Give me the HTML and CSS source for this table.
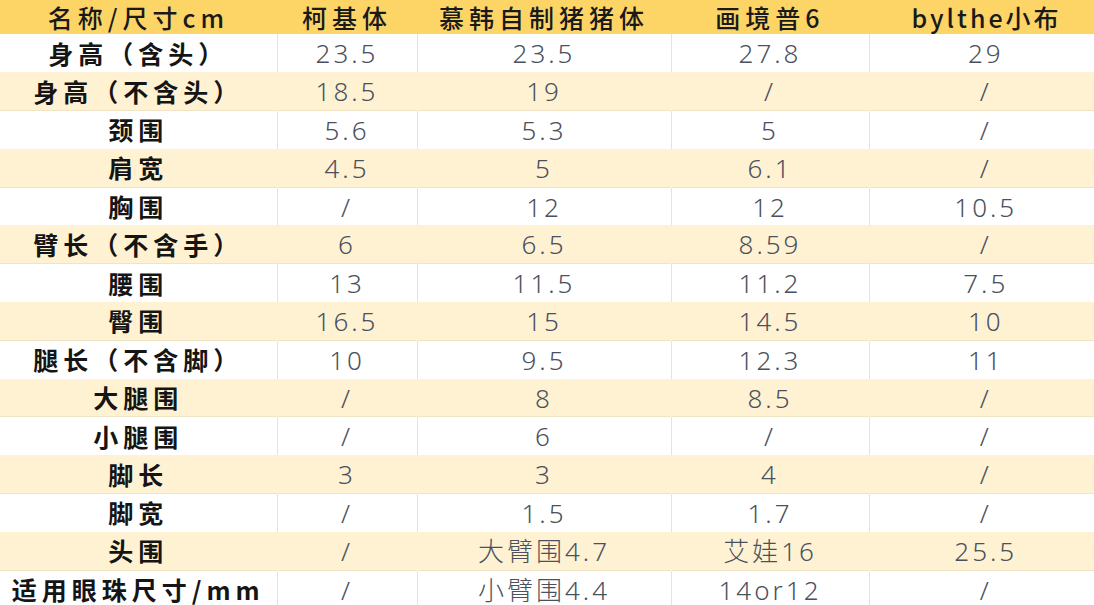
FILE: index.html
```html
<!DOCTYPE html>
<html lang="zh">
<head>
<meta charset="utf-8">
<title>尺寸对比</title>
<link rel="stylesheet" href="styles.css">
</head>
<body>
<table class="sizes">
  <colgroup>
    <col class="c1"><col class="c2"><col class="c3"><col class="c4"><col class="c5">
  </colgroup>
  <thead>
    <tr class="head">
      <th>名称/尺寸cm</th><th>柯基体</th><th>慕韩自制猪猪体</th><th>画境普6</th><th class="latin">bylthe小布</th>
    </tr>
  </thead>
  <tbody>
    <tr><th>身高（含头）</th><td>23.5</td><td>23.5</td><td>27.8</td><td>29</td></tr>
    <tr class="alt"><th>身高（不含头）</th><td>18.5</td><td>19</td><td>/</td><td>/</td></tr>
    <tr><th>颈围</th><td>5.6</td><td>5.3</td><td>5</td><td>/</td></tr>
    <tr class="alt"><th>肩宽</th><td>4.5</td><td>5</td><td>6.1</td><td>/</td></tr>
    <tr><th>胸围</th><td>/</td><td>12</td><td>12</td><td>10.5</td></tr>
    <tr class="alt"><th>臂长（不含手）</th><td>6</td><td>6.5</td><td>8.59</td><td>/</td></tr>
    <tr><th>腰围</th><td>13</td><td>11.5</td><td>11.2</td><td>7.5</td></tr>
    <tr class="alt"><th>臀围</th><td>16.5</td><td>15</td><td>14.5</td><td>10</td></tr>
    <tr><th>腿长（不含脚）</th><td>10</td><td>9.5</td><td>12.3</td><td>11</td></tr>
    <tr class="alt"><th>大腿围</th><td>/</td><td>8</td><td>8.5</td><td>/</td></tr>
    <tr><th>小腿围</th><td>/</td><td>6</td><td>/</td><td>/</td></tr>
    <tr class="alt"><th>脚长</th><td>3</td><td>3</td><td>4</td><td>/</td></tr>
    <tr><th>脚宽</th><td>/</td><td>1.5</td><td>1.7</td><td>/</td></tr>
    <tr class="alt"><th>头围</th><td>/</td><td>大臂围4.7</td><td>艾娃16</td><td>25.5</td></tr>
    <tr><th>适用眼珠尺寸/mm</th><td>/</td><td>小臂围4.4</td><td>14or12</td><td>/</td></tr>
  </tbody>
</table>
</body>
</html>
```

FILE: styles.css
```css
html, body {
  margin: 0;
  padding: 0;
  background: #ffffff;
  overflow: hidden;
}

.sizes {
  border-collapse: collapse;
  table-layout: fixed;
  width: 1094px;
  font-family: "Noto Sans CJK SC", "Noto Sans", sans-serif;
}

.c1 { width: 277px; }
.c2 { width: 140px; }
.c3 { width: 254px; }
.c4 { width: 198px; }
.c5 { width: 225px; }

.sizes th,
.sizes td {
  padding: 0;
  text-align: center;
  white-space: nowrap;
  line-height: 1;
}

.head {
  height: 34px;
  background: #fdd567;
}

.head th {
  font-size: 25px;
  font-weight: 500;
  letter-spacing: 5px;
  color: #1a1a1a;
  border: none;
}

.head th.latin {
  letter-spacing: 3px;
  padding-left: 10px;
}

tbody tr {
  height: 38.3px;
  background: #ffffff;
}

tbody tr.alt {
  background: #fef2d3;
  border-bottom: 1px solid #efe4c6;
}

tbody th {
  font-size: 25px;
  font-weight: 700;
  letter-spacing: 5px;
  color: #151515;
}

tbody td {
  font-family: "Noto Sans", "Noto Sans CJK SC", sans-serif;
  font-size: 26px;
  font-weight: 300;
  letter-spacing: 3px;
  color: #4a505e;
}

tbody tr th,
tbody tr td {
  border-right: 1.5px solid #e3e3e3;
}

tbody tr.alt th,
tbody tr.alt td {
  border-right-color: transparent;
}

tbody tr td:last-child {
  border-right: none;
  padding-left: 8px;
}
```
